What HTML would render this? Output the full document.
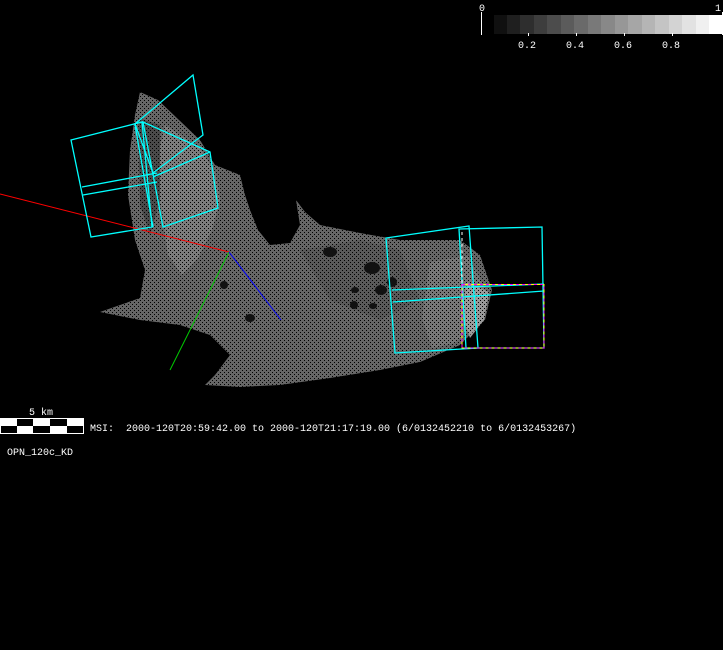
<!DOCTYPE html>
<html><head><style>
html,body{margin:0;padding:0;background:#000;width:723px;height:650px;overflow:hidden}
svg{position:absolute;left:0;top:0}
.t{font-family:"Liberation Mono",monospace;font-size:10px;fill:#fff}
</style></head><body>
<svg width="723" height="650" viewBox="0 0 723 650">
<defs>
<pattern id="st" width="4" height="4" patternUnits="userSpaceOnUse">
<rect width="4" height="4" fill="none"/>
<rect x="0" y="0" width="1" height="1" fill="#000"/>
<rect x="2" y="2" width="1" height="1" fill="#000"/>
</pattern>
</defs>
<rect width="723" height="650" fill="#000"/>
<!-- colorbar -->
<g>
<rect x="494" y="15" width="14" height="19" fill="#101010"/>
<rect x="507" y="15" width="14" height="19" fill="#1f1f1f"/>
<rect x="520" y="15" width="14" height="19" fill="#2e2e2e"/>
<rect x="534" y="15" width="14" height="19" fill="#3d3d3d"/>
<rect x="547" y="15" width="14" height="19" fill="#4c4c4c"/>
<rect x="561" y="15" width="14" height="19" fill="#5b5b5b"/>
<rect x="574" y="15" width="14" height="19" fill="#6a6a6a"/>
<rect x="588" y="15" width="14" height="19" fill="#797979"/>
<rect x="601" y="15" width="14" height="19" fill="#888888"/>
<rect x="615" y="15" width="14" height="19" fill="#979797"/>
<rect x="628" y="15" width="14" height="19" fill="#a6a6a6"/>
<rect x="642" y="15" width="14" height="19" fill="#b5b5b5"/>
<rect x="655" y="15" width="14" height="19" fill="#c4c4c4"/>
<rect x="669" y="15" width="14" height="19" fill="#d3d3d3"/>
<rect x="682" y="15" width="14" height="19" fill="#e2e2e2"/>
<rect x="696" y="15" width="14" height="19" fill="#f0f0f0"/>
<rect x="709" y="15" width="13" height="19" fill="#fff"/>
<line x1="481.5" y1="12" x2="481.5" y2="35" stroke="#fff"/>
<line x1="722.5" y1="12" x2="722.5" y2="35" stroke="#fff"/>
<g stroke="#fff"><line x1="528.5" y1="33" x2="528.5" y2="36"/><line x1="576.5" y1="33" x2="576.5" y2="36"/><line x1="624.5" y1="33" x2="624.5" y2="36"/><line x1="672.5" y1="33" x2="672.5" y2="36"/></g>
<text class="t" x="479" y="11">0</text>
<text class="t" x="715" y="11">1</text>
<text class="t" x="518" y="48">0.2</text>
<text class="t" x="566" y="48">0.4</text>
<text class="t" x="614" y="48">0.6</text>
<text class="t" x="662" y="48">0.8</text>
</g>
<!-- asteroid body -->
<path d="M140,92 L158,100 L200,140 L215,165 L240,175 L245,195 L250,210 L258,230 L270,245 L290,243 L300,225 L296,200 L305,212 L320,225 L360,233 L400,240 L460,240 L480,255 L492,290 L485,320 L460,345 L420,362 L380,370 L330,378 L280,385 L240,387 L205,385 L215,375 L230,355 L210,335 L180,325 L140,320 L100,312 L120,305 L140,298 L145,270 L135,240 L128,195 L130,150 L135,115 Z" fill="#666"/>
<path d="M165,125 L200,148 L215,172 L220,200 L212,230 L198,258 L182,275 L168,255 L162,215 L155,170 Z" fill="#7c7c7c"/>
<path d="M430,262 L468,256 L486,290 L478,322 L455,343 L432,348 L422,318 Z" fill="#777"/>
<path d="M466,282 L489,292 L484,320 L470,338 L463,318 Z" fill="#9a9a9a"/>
<path d="M138,118 L160,125 L160,200 L150,235 L140,205 Z" fill="#4a4a4a"/>
<path d="M300,250 L360,240 L400,250 L420,300 L380,320 L330,300 Z" fill="#5a5a5a"/>
<path d="M140,92 L158,100 L200,140 L215,165 L240,175 L245,195 L250,210 L258,230 L270,245 L290,243 L300,225 L296,200 L305,212 L320,225 L360,233 L400,240 L460,240 L480,255 L492,290 L485,320 L460,345 L420,362 L380,370 L330,378 L280,385 L240,387 L205,385 L215,375 L230,355 L210,335 L180,325 L140,320 L100,312 L120,305 L140,298 L145,270 L135,240 L128,195 L130,150 L135,115 Z" fill="url(#st)"/>
<g fill="#111">
<ellipse cx="330" cy="252" rx="7" ry="5"/><ellipse cx="372" cy="268" rx="8" ry="6"/>
<ellipse cx="381" cy="290" rx="6" ry="5"/><ellipse cx="392" cy="282" rx="5" ry="5"/>
<ellipse cx="355" cy="290" rx="4" ry="3"/><ellipse cx="224" cy="285" rx="4" ry="4"/>
<ellipse cx="250" cy="318" rx="5" ry="4"/><ellipse cx="354" cy="305" rx="4" ry="4"/>
<ellipse cx="373" cy="306" rx="4" ry="3"/>
</g>
<!-- axes -->
<line x1="0" y1="194" x2="229" y2="252" stroke="#f00"/>
<line x1="229" y1="252" x2="170" y2="370" stroke="#0c0"/>
<line x1="229" y1="252" x2="281" y2="320" stroke="#00f"/>
<!-- cyan boxes left -->
<g stroke="#0ff" fill="none" stroke-width="1.3">
<polygon points="71,140 142,122 152,227 91,237"/>
<polygon points="135,124 193,75 203,135 153,173"/>
<polygon points="143,122 210,152 218,208 163,227"/>
<line x1="135" y1="125" x2="153" y2="227"/>
<line x1="82" y1="187" x2="157" y2="173"/>
<line x1="83" y1="195" x2="157" y2="182"/>
<line x1="153" y1="177" x2="210" y2="152"/>
<polygon points="386,238 469,226 478,348 395,353"/>
<polygon points="459,229 542,227 544,348 466,348"/>
<line x1="392" y1="290" x2="544" y2="284"/>
<line x1="393" y1="302" x2="544" y2="291"/>
</g>
<line x1="462" y1="232" x2="462" y2="345" stroke="#fff" stroke-dasharray="3,3"/>
<rect x="462" y="284.5" width="82" height="63.5" fill="none" stroke="#ff0" stroke-width="1"/>
<rect x="462" y="284.5" width="82" height="63.5" fill="none" stroke="#f0f" stroke-width="1" stroke-dasharray="3,3"/>
<!-- scale bar -->
<rect x="0.5" y="418.5" width="83" height="15" fill="#000" stroke="#fff"/>
<rect x="0" y="418" width="17" height="8" fill="#fff"/>
<rect x="33" y="418" width="17" height="8" fill="#fff"/>
<rect x="67" y="418" width="17" height="8" fill="#fff"/>
<rect x="17" y="426" width="16" height="8" fill="#fff"/>
<rect x="50" y="426" width="17" height="8" fill="#fff"/>
<text class="t" x="29" y="415">5 km</text>
<text class="t" x="90" y="431" xml:space="preserve">MSI:  2000-120T20:59:42.00 to 2000-120T21:17:19.00 (6/0132452210 to 6/0132453267)</text>
<text class="t" x="7" y="455">OPN_120c_KD</text>
</svg>
</body></html>
